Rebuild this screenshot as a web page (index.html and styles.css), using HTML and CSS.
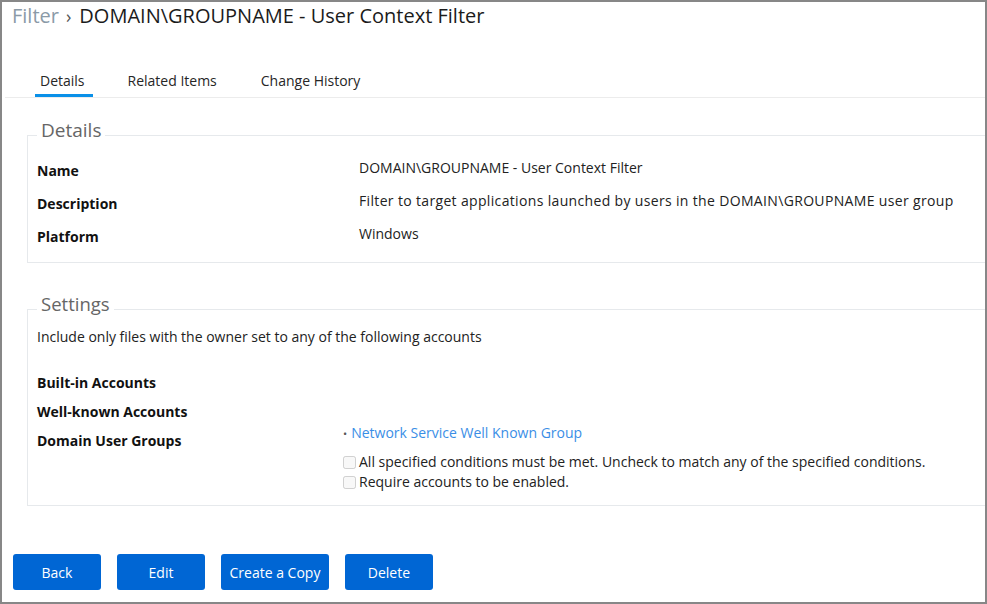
FILE: index.html
```html
<!DOCTYPE html>
<html>
<head>
<meta charset="utf-8">
<link rel="stylesheet" href="styles.css">
</head>
<body>
<div class="page">
  <h1 class="title"><span class="crumb">Filter</span><span class="sep">›</span><span class="name">DOMAIN\GROUPNAME - User Context Filter</span></h1>
  <div class="tabs">
    <div class="tab active">Details</div>
    <div class="tab">Related Items</div>
    <div class="tab">Change History</div>
  </div>
  <fieldset class="box details">
    <legend>Details</legend>
    <div class="row"><div class="label">Name</div><div class="value">DOMAIN\GROUPNAME - User Context Filter</div></div>
    <div class="row"><div class="label">Description</div><div class="value wide">Filter to target applications launched by users in the DOMAIN\GROUPNAME user group</div></div>
    <div class="row"><div class="label">Platform</div><div class="value">Windows</div></div>
  </fieldset>
  <fieldset class="box settings">
    <legend>Settings</legend>
    <div class="intro">Include only files with the owner set to any of the following accounts</div>
    <div class="srow first"><div class="slabel">Built-in Accounts</div><div class="svalue"></div></div>
    <div class="srow"><div class="slabel">Well-known Accounts</div><div class="svalue"></div></div>
    <div class="srow"><div class="slabel">Domain User Groups</div>
      <div class="svalue">
        <div class="item"><span class="bullet">•</span><a class="link" href="#">Network Service Well Known Group</a></div>
        <label class="check first-check"><input type="checkbox" disabled><span>All specified conditions must be met. Uncheck to match any of the specified conditions.</span></label>
        <label class="check"><input type="checkbox" disabled><span>Require accounts to be enabled.</span></label>
      </div>
    </div>
  </fieldset>
  <div class="actions">
    <button class="btn">Back</button>
    <button class="btn">Edit</button>
    <button class="btn">Create a Copy</button>
    <button class="btn">Delete</button>
  </div>
</div>
</body>
</html>
```

FILE: styles.css
```css
* { box-sizing: border-box; }
html, body { margin: 0; padding: 0; background: #fff; }
body { font-family: "Open Sans", "Liberation Sans", sans-serif; font-size: 14px; color: #222; }

.page {
  width: 987px;
  height: 604px;
  border: 2px solid #878787;
  overflow: hidden;
  background: #fff;
}

.title {
  margin: 0;
  padding: 0 0 0 10px;
  font-size: 20px;
  line-height: 27px;
  font-weight: 400;
  color: #1b1b1b;
  white-space: nowrap;
}
.crumb { color: #8b9aa7; }
.sep { color: #555; margin: 0 8px 0 7px; font-size: 18px; }

.tabs {
  display: flex;
  margin: 33px 0 0 3px;
  padding-left: 30px;
  border-bottom: 1px solid #ececec;
}
.tab {
  padding: 8px 8px 3px 5px;
  line-height: 20px;
  border-bottom: 3px solid transparent;
  margin-right: 31px;
  color: #262626;
  white-space: nowrap;
}
.tab.active { border-bottom-color: #0a90e8; margin-right: 30px; }

.box {
  margin: 19px -20px 0 25px;
  padding: 5px 0 5px 9px;
  border: 1px solid #e6e9ec;
  min-width: 0;
}
.box legend {
  padding: 0 4px 10px;
  font-size: 19px;
  line-height: 26px;
  color: #666;
}
.settings { margin-top: 28px; padding: 0 0 13px 9px; }
.settings legend { font-size: 18.5px; }

.row { display: flex; min-height: 33px; }
.label { width: 322px; flex: none; padding-top: 3px; font-weight: 700; line-height: 20px; color: #111; }
.value { line-height: 20px; color: #222; white-space: nowrap; }
.value.wide { letter-spacing: 0.34px; }

.intro { line-height: 20px; color: #222; margin-bottom: 18px; }
.srow { display: flex; min-height: 29px; }
.slabel { width: 306px; flex: none; padding-top: 8px; font-weight: 700; line-height: 20px; color: #111; }
.svalue { line-height: 20px; }
.item { white-space: nowrap; }
.bullet { color: #555; font-size: 11px; margin-right: 4px; }
.link { color: #3a8ee6; text-decoration: none; }
.check { display: flex; align-items: center; height: 20px; color: #222; white-space: nowrap; }
.first-check { margin-top: 8px; }
.check input { width: 13px; height: 13px; margin: 0 3px 0 0; }

.actions { display: flex; gap: 16px; margin: 48px 0 0 11px; }
.btn {
  min-width: 88px;
  height: 36px;
  padding: 0 8.5px;
  background: #0066d4;
  border: none;
  border-radius: 3px;
  color: #fff;
  font-family: inherit;
  font-size: 14px;
}
```
